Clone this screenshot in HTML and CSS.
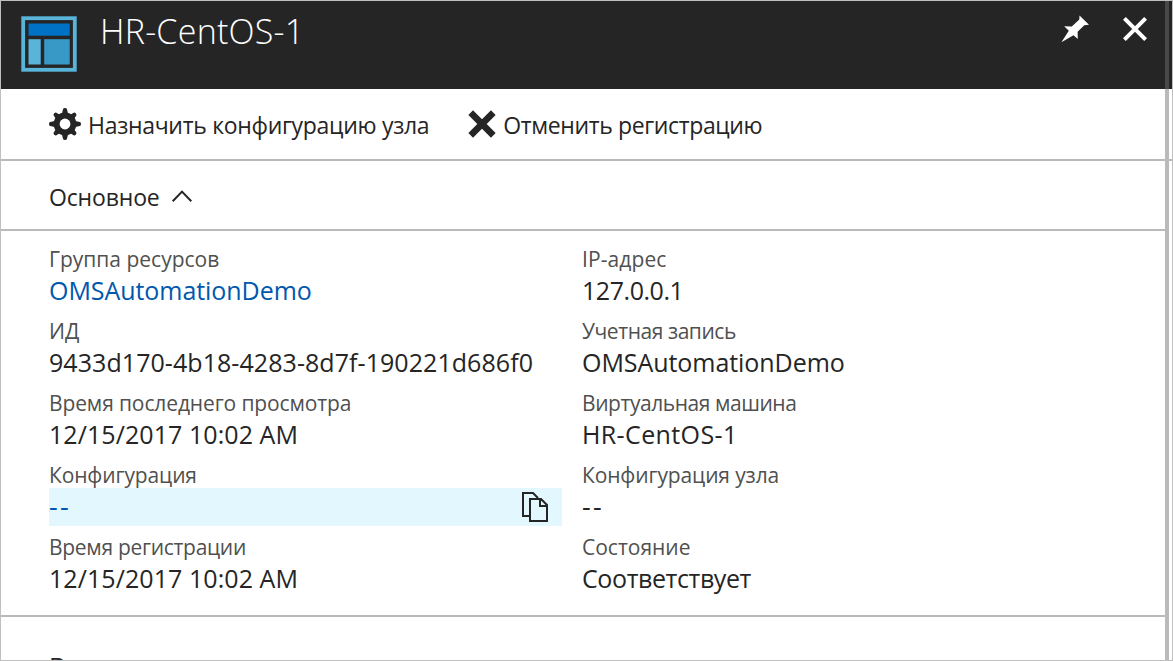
FILE: index.html
```html
<!DOCTYPE html>
<html lang="ru">
<head>
<meta charset="utf-8">
<title>HR-CentOS-1</title>
<link rel="stylesheet" href="styles.css">
</head>
<body>
<main class="blade">
  <header class="header">
    <svg class="logo" width="56" height="56" viewBox="0 0 56 56">
      <rect x="2.2" y="2.2" width="51.6" height="51.6" fill="none" stroke="#59b4d9" stroke-width="3.8"/>
      <rect x="7.5" y="7.5" width="41.2" height="12.2" fill="#0072c6"/>
      <rect x="7.5" y="23.2" width="12.2" height="25.3" fill="#59b4d9"/>
      <rect x="23.2" y="23.2" width="25.5" height="25.3" fill="#3999c6"/>
    </svg>
    <h1 class="title">HR-CentOS-1</h1>
    <svg class="pin" width="28" height="28" viewBox="0 0 28 28" fill="#fff">
      <path d="M18.5 0.5L28 9.8L23.3 10.3L16.6 16.8L16.8 24L12.5 20.2L0.4 27.2L7.8 15.8L3.2 11.3L10.8 11.4L18.3 4.6Z"/>
    </svg>
    <svg class="close" width="24" height="24" viewBox="0 0 24 24" stroke="#fff" stroke-width="4">
      <path d="M1.4 1.4L22.6 22.6M22.6 1.4L1.4 22.6"/>
    </svg>
  </header>
  <nav class="toolbar">
    <button class="command">
      <svg class="gear" width="32" height="32" viewBox="0 0 32 32">
        <g fill="#252525">
          <path id="tooth" d="M12.4 8L14 1.2Q14.2 0 16 0Q17.8 0 18 1.2L19.6 8V24L18 30.8Q17.8 32 16 32Q14.2 32 14 30.8L12.4 24Z"/>
          <use href="#tooth" transform="rotate(90 16 16)"/>
          <use href="#tooth" transform="rotate(45 16 16) translate(0.8 0.8) scale(.95)"/>
          <use href="#tooth" transform="rotate(135 16 16) translate(0.8 0.8) scale(.95)"/>
          <circle cx="16" cy="16" r="11.4"/>
        </g>
        <circle cx="16" cy="16" r="5.4" fill="#fff"/>
      </svg>
      <span class="assign">Назначить конфигурацию узла</span>
    </button>
    <button class="command">
      <svg class="cross" width="28" height="28" viewBox="0 0 28 28" stroke="#252525" stroke-width="6.6">
        <path d="M2.7 2.7L25.3 25.3M25.3 2.7L2.7 25.3"/>
      </svg>
      <span class="unregister">Отменить регистрацию</span>
    </button>
  </nav>
  <div class="section-bar">
    <span>Основное</span>
    <svg class="chevron" width="20" height="12" viewBox="0 0 20 12" fill="none" stroke="#252525" stroke-width="2">
      <path d="M.7 11.2L10 1.6L19.3 11.2"/>
    </svg>
  </div>
  <dl class="essentials">
    <div class="item"><dt>Группа ресурсов</dt><dd class="link"><span class="account">OMSAutomationDemo</span></dd></div>
    <div class="item"><dt class="loose">IP-адрес</dt><dd><span class="ip">127.0.0.1</span></dd></div>
    <div class="item"><dt>ИД</dt><dd><span class="id">9433d170-4b18-4283-8d7f-190221d686f0</span></dd></div>
    <div class="item"><dt class="tight">Учетная запись</dt><dd><span class="account">OMSAutomationDemo</span></dd></div>
    <div class="item"><dt class="snug">Время последнего просмотра</dt><dd><span class="date">12/15/2017 10:02 AM</span></dd></div>
    <div class="item"><dt class="tight">Виртуальная машина</dt><dd><span class="host">HR-CentOS-1</span></dd></div>
    <div class="item"><dt class="snug">Конфигурация</dt><dd class="link active"><span class="dashes">--</span>
      <svg class="copy" width="28" height="32" viewBox="0 0 28 32" fill="none" stroke="#252525" stroke-width="2">
        <path d="M8 25H2V2H12L17 7"/>
        <path d="M9 8H20L26 14V30H9ZM19 8V15H26"/>
      </svg></dd></div>
    <div class="item"><dt class="snug">Конфигурация узла</dt><dd><span class="dashes">--</span></dd></div>
    <div class="item"><dt class="close-set">Время регистрации</dt><dd><span class="date">12/15/2017 10:02 AM</span></dd></div>
    <div class="item"><dt>Состояние</dt><dd><span class="state">Соответствует</span></dd></div>
  </dl>
  <section class="next"><span>В</span></section>
  <div class="rail"></div>
</main>
</body>
</html>
```
FILE: styles.css
```css
* { box-sizing: border-box; }
body { margin: 0; background: #fff; color: #252525; font-family: "Open Sans", "Noto Sans", sans-serif; }
.blade { position: relative; width: 1173px; height: 661px; border: 1px solid #bfbfbf; overflow: hidden; display: flex; flex-direction: column; }
.header { flex: none; height: 88px; background: #252525; display: flex; align-items: flex-start; padding: 15px 25px 0 20px; }
.title { flex: 1; margin: -8px 0 0 23px; color: #fff; font-size: 34px; font-weight: 300; line-height: 46px; letter-spacing: .25px; white-space: nowrap; }
.pin { margin: -1px 34px 0 0; }
.close { margin-top: 1px; }
.toolbar { flex: none; height: 72px; border-bottom: 2px solid #bababa; display: flex; align-items: center; gap: 39px; padding-left: 48px; }
.command { display: flex; align-items: center; gap: 7px; padding: 0; border: 0; background: none; color: inherit; font: 23px/32px "Open Sans", "Noto Sans", sans-serif; white-space: nowrap; }
.command span { margin-top: 2px; }
.assign { letter-spacing: -.3px; }
.unregister { letter-spacing: -.37px; }
.section-bar { flex: none; width: 1164px; height: 70px; border-bottom: 2px solid #bababa; display: flex; align-items: center; padding: 3px 0 0 48px; gap: 12px; font-size: 23px; letter-spacing: -.15px; }
.chevron { margin-top: -2px; }
.essentials { flex: none; width: 1164px; height: 386px; margin: 0; padding: 12px 0 0 48px; border-bottom: 2px solid #bababa; display: grid; grid-template-columns: 513px 513px; column-gap: 20px; grid-auto-rows: 72px; align-content: start; }
dt { height: 32px; font-size: 21px; line-height: 32px; color: #505050; white-space: nowrap; }
dd { height: 38px; margin: -3px 0 0; font-size: 25px; line-height: 38px; white-space: nowrap; display: flex; align-items: center; justify-content: space-between; }
dd span { margin-top: -2px; }
.loose { letter-spacing: .1px; }
.snug { letter-spacing: -.12px; }
.close-set { letter-spacing: -.3px; }
.tight { letter-spacing: -.44px; }
.account { letter-spacing: -.06px; }
.ip { letter-spacing: -.45px; }
.id { letter-spacing: .06px; }
.date { letter-spacing: .07px; }
.host { letter-spacing: .38px; }
.state { letter-spacing: -.4px; }
.dashes { font-size: 27px; letter-spacing: 2.2px; }
.link { color: #0058ad; }
.active { background: #e3f7fe; padding-right: 13px; }
.next { flex: 1; padding: 30px 0 0 48px; font-size: 25px; line-height: 38px; }
.rail { position: absolute; top: 0; right: 3px; width: 4px; height: 100%; background: #bababa; }
.rail::before { content: ""; display: block; height: 88px; background: #494949; }
```
